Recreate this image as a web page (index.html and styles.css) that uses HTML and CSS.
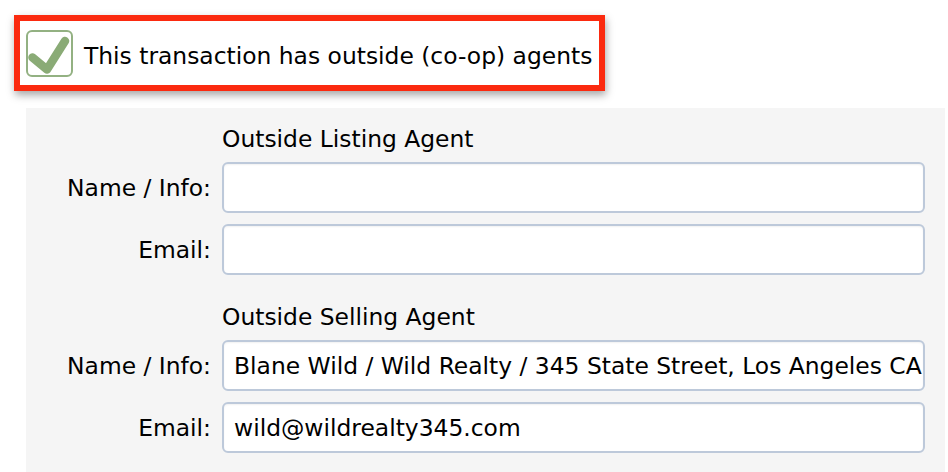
FILE: index.html
```html
<!DOCTYPE html>
<html lang="en">
<head>
<meta charset="utf-8">
<title>Outside agents</title>
<link rel="stylesheet" href="styles.css">
</head>
<body>
<div class="header">
  <label class="coop">
    <span class="checkbox">
      <svg width="43" height="43" viewBox="0 0 43 43" aria-hidden="true">
        <path d="M4.5 25.5 L19 37.5 L37 9" fill="none" stroke="#8aab76" stroke-width="8.5" stroke-linejoin="round" stroke-linecap="round"/>
      </svg>
    </span>
    <span class="coop-text">This transaction has outside (co-op) agents</span>
  </label>
</div>
<div class="panel">
  <section class="group">
    <div class="heading">Outside Listing Agent</div>
    <div class="row">
      <span class="label">Name / Info:</span>
      <div class="field"></div>
    </div>
    <div class="row">
      <span class="label">Email:</span>
      <div class="field"></div>
    </div>
  </section>
  <section class="group">
    <div class="heading">Outside Selling Agent</div>
    <div class="row">
      <span class="label">Name / Info:</span>
      <div class="field">Blane Wild / Wild Realty / 345 State Street, Los Angeles CA</div>
    </div>
    <div class="row">
      <span class="label">Email:</span>
      <div class="field">wild@wildrealty345.com</div>
    </div>
  </section>
</div>
</body>
</html>
```
FILE: styles.css
```css
html, body {
  margin: 0;
  padding: 0;
  background: #ffffff;
  overflow: hidden;
}
body {
  font-family: "DejaVu Sans", "Liberation Sans", sans-serif;
  font-size: 23.4px;
  line-height: 28px;
  color: #000;
  width: 948px;
  height: 472px;
}
.header {
  padding: 15px 0 0 14px;
}
.coop {
  display: inline-flex;
  align-items: center;
  gap: 11px;
  border: 6px solid #fb2a0f;
  padding: 9px 7px 8px 6px;
  box-shadow: 1px 4px 8px rgba(0, 0, 0, 0.35);
  background: #fff;
}
.checkbox {
  box-sizing: border-box;
  width: 47px;
  height: 47px;
  border: 2px solid #93b182;
  border-radius: 6px;
  background: #fff;
  display: flex;
  align-items: center;
  justify-content: center;
}
.checkbox svg {
  display: block;
}
.coop-text {
  margin-top: 4px;
  white-space: nowrap;
}
.panel {
  margin: 17px 3px 0 26px;
  background: #f5f5f5;
  padding: 17px 20px 30px 0;
  display: flex;
  flex-direction: column;
  gap: 28px;
}
.group {
  display: flex;
  flex-direction: column;
  gap: 11px;
}
.heading {
  margin-left: 196px;
  margin-bottom: -2px;
  white-space: nowrap;
}
.row {
  display: grid;
  grid-template-columns: 185px 1fr;
  column-gap: 11px;
  align-items: center;
}
.label {
  text-align: right;
  white-space: nowrap;
}
.field {
  box-sizing: border-box;
  height: 51px;
  border: 2px solid #bdc9da;
  border-radius: 6px;
  background: #fff;
  box-shadow: inset 0 1px 2px rgba(0, 0, 0, 0.06);
  padding: 0 6px 0 10px;
  display: flex;
  align-items: center;
  white-space: nowrap;
  overflow: hidden;
}
```
